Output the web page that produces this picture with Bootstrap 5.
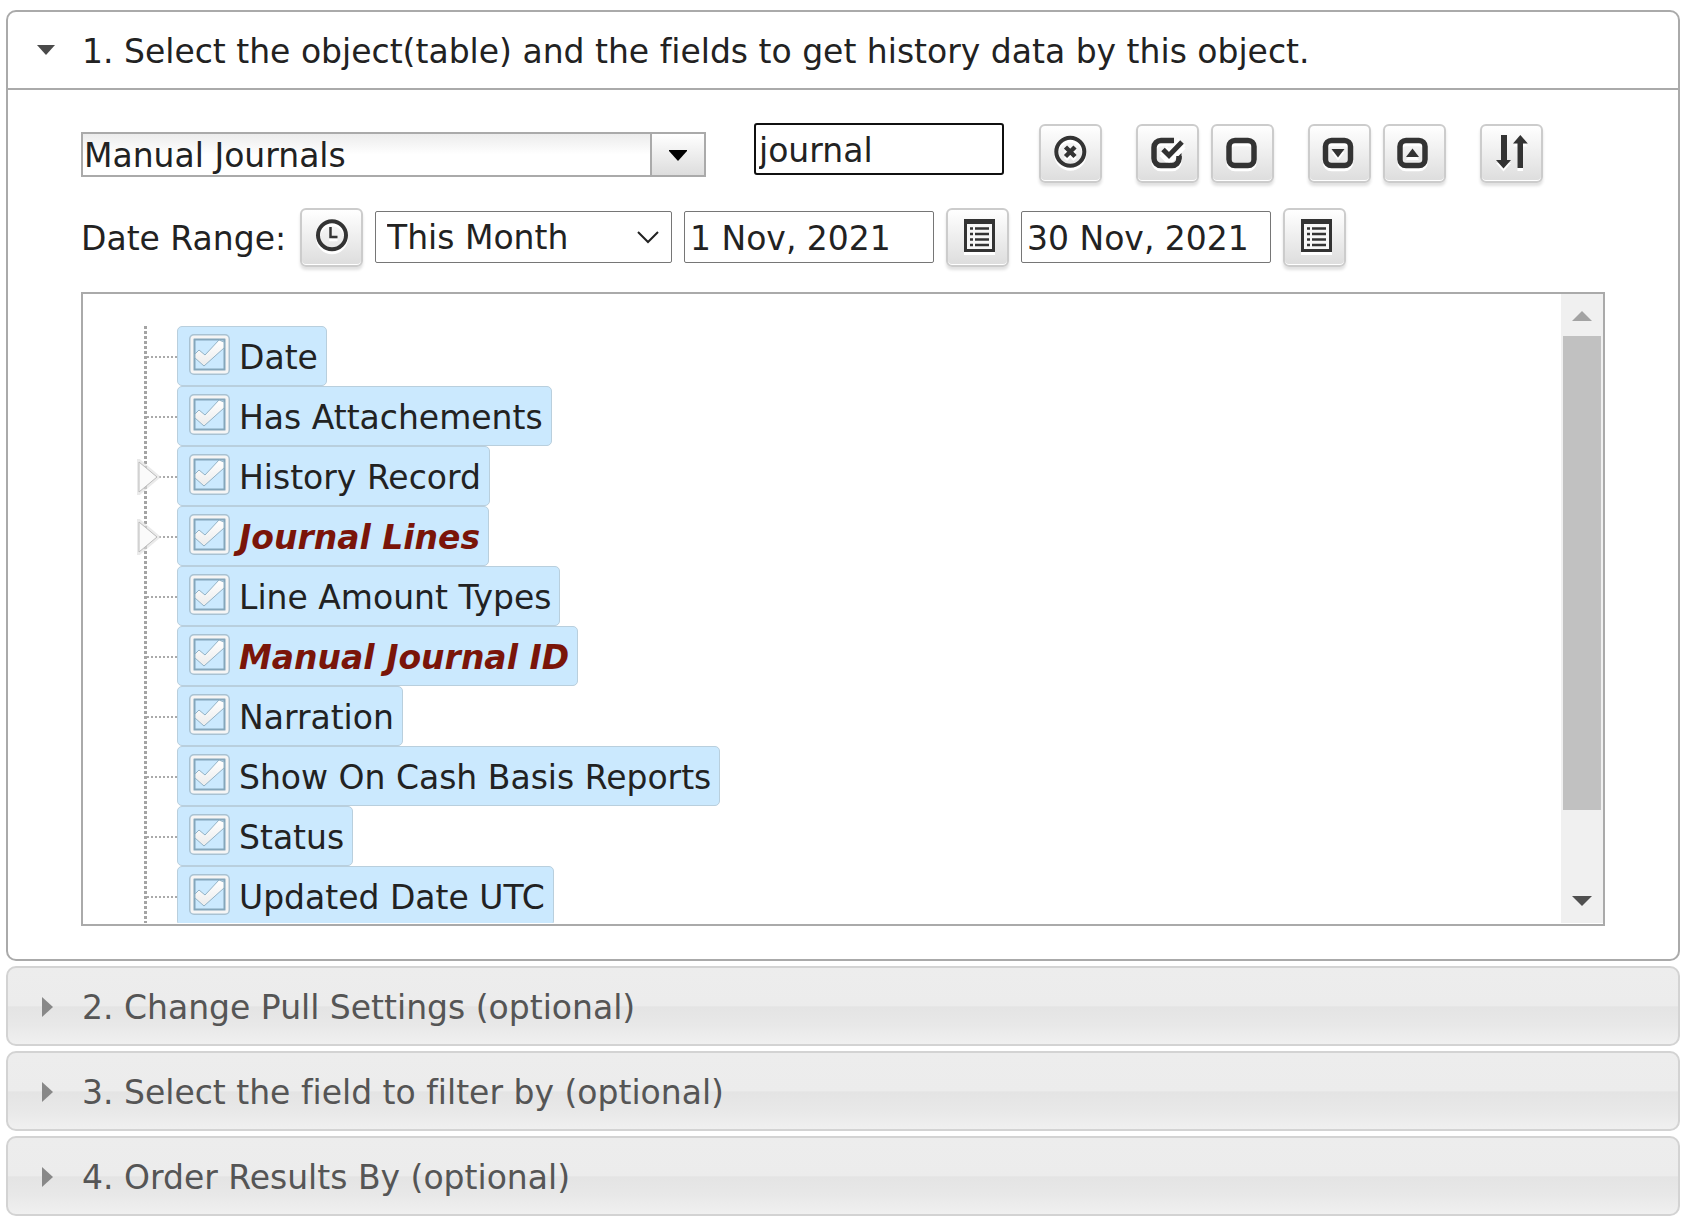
<!DOCTYPE html>
<html lang="en">
<head>
<meta charset="utf-8">
<meta name="viewport" content="width=device-width, initial-scale=1">
<title>Pull history data</title>
<link rel="stylesheet" href="https://cdn.jsdelivr.net/npm/bootstrap@5.3.0/dist/css/bootstrap.min.css">
<style>
  body { font-family: Verdana, "DejaVu Sans", sans-serif; font-size: 33px; line-height: 40px; font-variant-ligatures: none; color: #222; background: #fff; }
  .steps { padding: 10px 5px 2px 6px; gap: 5px; }
  .step-head { height: 80px; padding: 3px 28px 0 29px; gap: 18px; border: 2px solid #d3d3d3; border-radius: 10px; color: #555; text-align: left; font-variant-ligatures: none;
    background: linear-gradient(#ededed 0, #ececec 50%, #e4e4e4 51%, #e8e8e8 75%, #f0f0f0 100%); }
  .step-head.open { border-color: #aaa; border-radius: 10px 10px 0 0; color: #222; background: #fff; }
  .step-head svg { width: 27px; height: 24px; flex: none; }
  .step-body { border: 2px solid #aaa; border-top: 0; border-radius: 0 0 10px 10px; padding: 33px 73px 33px 73px; gap: 25px; }
  .combo { width: 625px; height: 45px; margin: 9px 48px 0 0; border: 2px solid #aaa; }
  .combo input { min-width: 0; border: 0; padding: 2px 0 0 1px; color: #222; outline: 0; background: linear-gradient(#ececec, #fff 50%); }
  .combo button { width: 54px; border: 0; border-left: 2px solid #aaa; background: linear-gradient(#fff, #ddd); }
  .combo svg { width: 18px; height: 11px; display: block; margin: 2px auto 0; }
  .field { width: 250px; height: 52px; padding: 2px 5px 0; border: 1px solid #767676; border-radius: 2px; color: #222; background: #fff; }
  .field.active { border: 2px solid #101010; border-radius: 3px; padding: 2px 3px 0; outline: 0; margin-right: 35px; }
  .period { width: 297px; padding: 2px 40px 0 11px; appearance: none; 
    background: #fff url("data:image/svg+xml,%3Csvg xmlns='http://www.w3.org/2000/svg' viewBox='0 0 22 14'%3E%3Cpath d='M1 2l10 10L21 2' fill='none' stroke='%23222' stroke-width='2'/%3E%3C/svg%3E") no-repeat right 12px center / 22px 14px; }
  .tool { width: 63px; height: 59px; padding: 0; border: 2px solid #ccc; border-radius: 6px; flex: none;
    background: linear-gradient(#fff, #ddd); box-shadow: inset 0 -1px 0 #fff, 0 3px 3px rgba(0,0,0,.12); }
  .tool svg { display: block; width: 59px; height: 55px; filter: drop-shadow(0 3px 0 #fff); fill: none; stroke: #333; }
  .tool .solid { fill: #333; stroke: none; }
  .tools { gap: 12px; padding-top: 1px; }
  .tools + .tools { margin-left: 34px; }
  .range { column-gap: 12px; }
  .range label { min-width: 207px; padding-top: 2px; }
  .range .field { margin-bottom: 1px; }
  .tree-box { height: 634px; border: 2px solid #aaa; padding-bottom: 1px; }
  .tree { padding: 32px 0 0 61px; min-width: 0; }
  .node { height: 60px; padding-left: 33px; position: relative;
    background: repeating-linear-gradient(#a4a4a4 0 3px, transparent 3px 5px) 0 0 / 3px 100% no-repeat,
                repeating-linear-gradient(90deg, #aaa 0 2px, transparent 2px 4px) 3px 30px / 30px 2px no-repeat; }
  .node > svg { position: absolute; left: -7px; top: 13px; width: 24px; height: 36px; }
  .node label { height: 60px; padding: 0 8px 0 10px; gap: 8px; border: 1px solid #b9cfdd; border-radius: 5px; background: #cbe9fe; white-space: nowrap; }
  .node label span { padding-top: 3px; }
  .node .hit { color: #7a1509; font-weight: bold; font-style: italic; }
  .node input { appearance: none; width: 43px; height: 43px; margin: 0 0 4px; flex: none;
    background: url("data:image/svg+xml,%3Csvg xmlns='http://www.w3.org/2000/svg' viewBox='0 0 43 43'%3E%3Cdefs%3E%3ClinearGradient id='g' x2='0' y2='1'%3E%3Cstop stop-color='%23fff'/%3E%3Cstop offset='1' stop-color='%23ececec'/%3E%3C/linearGradient%3E%3C/defs%3E%3Cg fill='none'%3E%3Crect x='2' y='2' width='39' height='39' rx='4' stroke='%23a9c2d2' stroke-width='2'/%3E%3Crect x='6' y='6' width='31' height='31' stroke='%2384a6bb' stroke-width='3'/%3E%3Crect x='4' y='4' width='35' height='35' rx='2' stroke='%23f5f5f5' stroke-width='3'/%3E%3C/g%3E%3Cpath d='M7 21l4-4 6 5L31 7l5 2v6L16 33 7 25z' fill='url(%23g)' stroke='%2393b2c5' stroke-width='1'/%3E%3C/svg%3E") center / 43px 43px no-repeat; }
  .scroll-track { width: 42px; padding: 17px 2px; background: #f0f0f0; }
  .scroll-track svg { width: 20px; height: 10px; }
  .scroll-thumb { height: 474px; margin-top: 15px; background: #c1c1c1; }
</style>
</head>
<body>
<main class="steps d-flex flex-column">
  <section>
    <button type="button" class="step-head open w-100 d-flex align-items-center" aria-expanded="true">
      <svg viewBox="0 0 27 24" aria-hidden="true"><path d="M0 5h18l-9 10z" fill="#4a4a4a"/></svg>
      <span>1. Select the object(table) and the fields to get history data by this object.</span>
    </button>
    <div class="step-body d-flex flex-column">
      <div class="d-flex flex-wrap align-items-start">
        <div class="combo d-flex">
          <input type="text" class="flex-grow-1" value="Manual Journals" aria-label="Object">
          <button type="button" class="p-0" aria-label="Show objects"><svg viewBox="0 0 18 11"><path d="M0 0h18v1l-9 10L0 1z"/></svg></button>
        </div>
        <input type="text" class="field active" value="journal" aria-label="Search fields">
        <div class="tools d-flex">
          <button type="button" class="tool" aria-label="Clear search"><svg viewBox="2 2 59 55"><circle cx="31.300" cy="27.700" r="14" stroke-width="4"/><path d="M26.500 23l9.500 9.500M36 23l-9.500 9.500" stroke-width="4.500"/></svg></button>
        </div>
        <div class="tools d-flex">
          <button type="button" class="tool" aria-label="Check all"><svg viewBox="2 2 59 55"><path d="M38 16.500H25a7 7 0 0 0-7 7v11a7 7 0 0 0 7 7h11a7 7 0 0 0 7-7V32" stroke-width="5.500"/><path class="solid" d="M40.500 34l5-5v5l-1 4h-4z"/><path d="M27 25.500l6 6L46 18" stroke="#fff" stroke-width="10"/><path d="M27 25.500l6 6L46 18" stroke-width="5"/></svg></button>
          <button type="button" class="tool" aria-label="Uncheck all"><svg viewBox="2 2 59 55"><rect x="18" y="16.500" width="25" height="25" rx="6" stroke-width="5.500"/></svg></button>
        </div>
        <div class="tools d-flex">
          <button type="button" class="tool" aria-label="Expand all"><svg viewBox="2 2 59 55"><rect x="17.500" y="16.500" width="25" height="25" rx="6" stroke-width="5.500"/><path class="solid" d="M23.500 25H36.500l-6.500 8.500z"/></svg></button>
          <button type="button" class="tool" aria-label="Collapse all"><svg viewBox="2 2 59 55"><rect x="17" y="16.500" width="25" height="25" rx="6" stroke-width="5.500"/><path class="solid" d="M23 33H36l-6.500-8.500z"/></svg></button>
        </div>
        <div class="tools d-flex">
          <button type="button" class="tool" aria-label="Sort"><svg viewBox="2 2 59 55"><path class="solid" d="M21 11h6v25h4l-7.500 8.500L16 36h5zM40.300 11l7.500 8.500H43V44h-5.500V19.500H33z"/></svg></button>
        </div>
      </div>
      <div class="range d-flex flex-wrap align-items-center">
        <label for="period">Date Range:</label>
        <button type="button" class="tool" aria-label="Pick period"><svg viewBox="2 2 59 55"><circle cx="32" cy="27.300" r="14" stroke-width="4"/><path d="M30.500 19v10H37.500" stroke-width="2.500"/></svg></button>
        <select id="period" class="field period"><option>This Month</option></select>
        <input type="text" class="field" value="1 Nov, 2021" aria-label="From">
        <button type="button" class="tool" aria-label="Pick start date"><svg viewBox="2 2 59 55"><path d="M18 11h31v33H18z" fill="#333" stroke="none"/><path d="M21 16h25v25H21z" fill="#f7f7f7" stroke="none"/><path d="M24 20.500h3M24 26h3M24 31.500h3M24 37h3M29 20.500h14M29 26h14M29 31.500h14M29 37h14" stroke-width="2.500"/></svg></button>
        <input type="text" class="field" value="30 Nov, 2021" aria-label="To">
        <button type="button" class="tool" aria-label="Pick end date"><svg viewBox="2 2 59 55"><path d="M18 11h31v33H18z" fill="#333" stroke="none"/><path d="M21 16h25v25H21z" fill="#f7f7f7" stroke="none"/><path d="M24 20.500h3M24 26h3M24 31.500h3M24 37h3M29 20.500h14M29 26h14M29 31.500h14M29 37h14" stroke-width="2.500"/></svg></button>
      </div>
      <div class="tree-box d-flex overflow-hidden">
        <ul class="tree list-unstyled mb-0 flex-grow-1 overflow-hidden">
          <li class="node"><label class="d-inline-flex align-items-center"><input type="checkbox" checked><span>Date</span></label></li>
          <li class="node"><label class="d-inline-flex align-items-center"><input type="checkbox" checked><span>Has Attachements</span></label></li>
          <li class="node"><svg viewBox="0 0 24 36"><path d="M2 2v32L21 18z" fill="#fff" stroke="#ddd" stroke-width="4" opacity=".6"/><path d="M2 3v30L20 18z" fill="#fafafa" stroke="#bbb"/></svg><label class="d-inline-flex align-items-center"><input type="checkbox" checked><span>History Record</span></label></li>
          <li class="node"><svg viewBox="0 0 24 36"><path d="M2 2v32L21 18z" fill="#fff" stroke="#ddd" stroke-width="4" opacity=".6"/><path d="M2 3v30L20 18z" fill="#fafafa" stroke="#bbb"/></svg><label class="d-inline-flex align-items-center"><input type="checkbox" checked><span class="hit">Journal Lines</span></label></li>
          <li class="node"><label class="d-inline-flex align-items-center"><input type="checkbox" checked><span>Line Amount Types</span></label></li>
          <li class="node"><label class="d-inline-flex align-items-center"><input type="checkbox" checked><span class="hit">Manual Journal ID</span></label></li>
          <li class="node"><label class="d-inline-flex align-items-center"><input type="checkbox" checked><span>Narration</span></label></li>
          <li class="node"><label class="d-inline-flex align-items-center"><input type="checkbox" checked><span>Show On Cash Basis Reports</span></label></li>
          <li class="node"><label class="d-inline-flex align-items-center"><input type="checkbox" checked><span>Status</span></label></li>
          <li class="node"><label class="d-inline-flex align-items-center"><input type="checkbox" checked><span>Updated Date UTC</span></label></li>
        </ul>
        <div class="scroll-track d-flex flex-column flex-shrink-0" aria-hidden="true">
          <svg class="align-self-center flex-shrink-0" viewBox="0 0 20 10"><path d="M0 10L10 0l10 10z" fill="#a3a3a3"/></svg>
          <div class="scroll-thumb"></div>
          <svg class="align-self-center flex-shrink-0 mt-auto" viewBox="0 0 20 10"><path d="M0 0h20L10 10z" fill="#505050"/></svg>
        </div>
      </div>
    </div>
  </section>
  <button type="button" class="step-head w-100 d-flex align-items-center" aria-expanded="false">
    <svg viewBox="0 0 27 24" aria-hidden="true"><path d="M5 1l11 10L5 21z" fill="#888"/></svg><span>2. Change Pull Settings (optional)</span>
  </button>
  <button type="button" class="step-head w-100 d-flex align-items-center" aria-expanded="false">
    <svg viewBox="0 0 27 24" aria-hidden="true"><path d="M5 1l11 10L5 21z" fill="#888"/></svg><span>3. Select the field to filter by (optional)</span>
  </button>
  <button type="button" class="step-head w-100 d-flex align-items-center" aria-expanded="false">
    <svg viewBox="0 0 27 24" aria-hidden="true"><path d="M5 1l11 10L5 21z" fill="#888"/></svg><span>4. Order Results By (optional)</span>
  </button>
</main>
<script src="https://cdn.jsdelivr.net/npm/bootstrap@5.3.0/dist/js/bootstrap.bundle.min.js"></script>
</body>
</html>
